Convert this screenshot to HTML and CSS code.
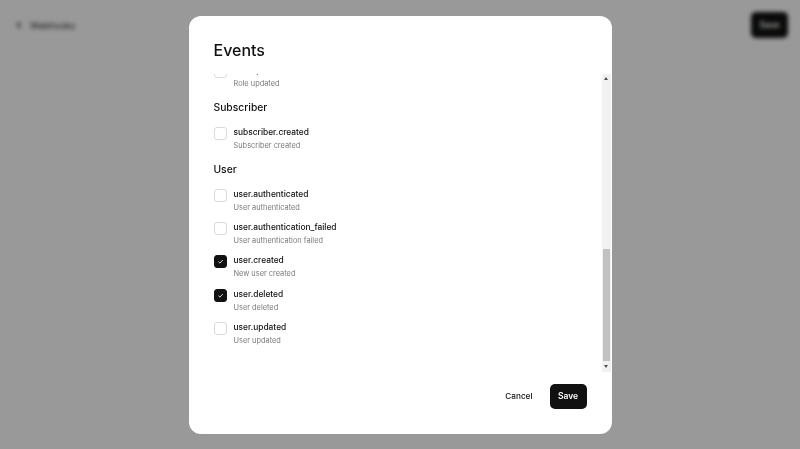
FILE: index.html
```html
<!DOCTYPE html>
<html lang="en">
<head>
  <meta charset="UTF-8">
  <title>Webhooks</title>
  <meta name="viewport" content="width=device-width, initial-scale=1">
  <link rel="stylesheet" href="styles.css">
</head>
<body>
  <header class="topbar">
    <a class="back-link" href="#">
      <svg width="8" height="8" viewBox="0 0 8 8"><polyline points="5.5,1 2.5,4 5.5,7" fill="none" stroke="currentColor" stroke-width="1.4"/></svg>
      Webhooks
    </a>
    <button class="btn btn-dark">Save</button>
  </header>

  <div class="overlay">
    <div class="dialog">
      <h2 class="dialog-title">Events</h2>

      <div class="event-pane">
        <div class="event-scroll">
          <div class="event-list">
            <section class="event-group">
              <h3>Invite</h3>
              <label class="event"><span class="check"></span><span class="event-text"><span class="event-name">invite.accepted</span><span class="event-desc">Invite accepted</span></span></label>
              <label class="event"><span class="check"></span><span class="event-text"><span class="event-name">invite.created</span><span class="event-desc">Invite created</span></span></label>
              <label class="event"><span class="check"></span><span class="event-text"><span class="event-name">invite.revoked</span><span class="event-desc">Invite revoked</span></span></label>
            </section>

            <section class="event-group">
              <h3>Organization</h3>
              <label class="event"><span class="check"></span><span class="event-text"><span class="event-name">organization.created</span><span class="event-desc">Organization created</span></span></label>
              <label class="event"><span class="check"></span><span class="event-text"><span class="event-name">organization.deleted</span><span class="event-desc">Organization deleted</span></span></label>
              <label class="event"><span class="check"></span><span class="event-text"><span class="event-name">organization.member_added</span><span class="event-desc">Member added to organization</span></span></label>
              <label class="event"><span class="check"></span><span class="event-text"><span class="event-name">organization.updated</span><span class="event-desc">Organization updated</span></span></label>
            </section>

            <section class="event-group">
              <h3>Role</h3>
              <label class="event"><span class="check"></span><span class="event-text"><span class="event-name">role.created</span><span class="event-desc">Role created</span></span></label>
              <label class="event"><span class="check"></span><span class="event-text"><span class="event-name">role.deleted</span><span class="event-desc">Role deleted</span></span></label>
              <label class="event"><span class="check"></span><span class="event-text"><span class="event-name">role.permissions_updated</span><span class="event-desc">Role permissions updated</span></span></label>
              <label class="event"><span class="check"></span><span class="event-text"><span class="event-name">role.updated</span><span class="event-desc">Role updated</span></span></label>
            </section>

            <section class="event-group">
              <h3>Subscriber</h3>
              <label class="event"><span class="check"></span><span class="event-text"><span class="event-name">subscriber.created</span><span class="event-desc">Subscriber created</span></span></label>
            </section>

            <section class="event-group">
              <h3>User</h3>
              <label class="event"><span class="check"></span><span class="event-text"><span class="event-name">user.authenticated</span><span class="event-desc">User authenticated</span></span></label>
              <label class="event"><span class="check"></span><span class="event-text"><span class="event-name">user.authentication_failed</span><span class="event-desc">User authentication failed</span></span></label>
              <label class="event"><span class="check is-checked"><svg viewBox="0 0 13 13"><polyline points="4,6.7 5.8,8.4 9.2,4.8"/></svg></span><span class="event-text"><span class="event-name">user.created</span><span class="event-desc">New user created</span></span></label>
              <label class="event"><span class="check is-checked"><svg viewBox="0 0 13 13"><polyline points="4,6.7 5.8,8.4 9.2,4.8"/></svg></span><span class="event-text"><span class="event-name">user.deleted</span><span class="event-desc">User deleted</span></span></label>
              <label class="event"><span class="check"></span><span class="event-text"><span class="event-name">user.updated</span><span class="event-desc">User updated</span></span></label>
            </section>
          </div>
        </div>

        <div class="scrollbar">
          <span class="scrollbar-btn up"></span>
          <div class="scrollbar-track"><span class="scrollbar-thumb"></span></div>
          <span class="scrollbar-btn down"></span>
        </div>
      </div>

      <div class="dialog-footer">
        <button class="btn btn-ghost">Cancel</button>
        <button class="btn btn-dark">Save</button>
      </div>
    </div>
  </div>
</body>
</html>
```

FILE: styles.css
```css
* {
  box-sizing: border-box;
}

body {
  margin: 0;
  font-family: 'Inter', sans-serif;
  color: #111;
  background: #fff;
  height: 100vh;
  overflow: hidden;
}

.topbar {
  display: flex;
  justify-content: space-between;
  align-items: center;
  padding: 12px 12px 0 15px;
}

.back-link {
  display: flex;
  align-items: center;
  gap: 7px;
  font-size: 9px;
  color: #333;
  text-decoration: none;
}

.btn {
  font-family: inherit;
  font-size: 8.5px;
  font-weight: 600;
  border: none;
  border-radius: 5px;
  cursor: pointer;
}

.btn-dark {
  background: #111;
  color: #fff;
  width: 37px;
  height: 25px;
}

.topbar .btn-dark {
  height: 26px;
}

.btn-ghost {
  background: transparent;
  color: #111;
  font-size: 8.2px;
  font-weight: 500;
  height: 25px;
  padding: 0 12px;
}

.overlay {
  position: fixed;
  inset: 0;
  background: rgba(0, 0, 0, 0.4);
  backdrop-filter: blur(2px);
  display: flex;
  align-items: center;
  justify-content: center;
}

.dialog {
  width: 423px;
  height: 418px;
  background: #fff;
  border-radius: 12px;
  display: flex;
  flex-direction: column;
  overflow: hidden;
}

.dialog-title {
  margin: 0;
  padding: 23px 25px 0;
  height: 58px;
  font-size: 16px;
  font-weight: 500;
  line-height: 22px;
}

.event-pane {
  flex: 1;
  min-height: 0;
  display: flex;
  margin-right: 1px;
}

.event-scroll {
  flex: 1;
  overflow-y: auto;
  display: flex;
  flex-direction: column-reverse;
  scrollbar-width: none;
}

/* drawn scrollbar, the real one is hidden in the shot */
.scrollbar {
  flex: none;
  width: 9px;
  display: flex;
  flex-direction: column;
  background: #f1f1f1;
}

.scrollbar-btn {
  height: 10px;
  display: flex;
  align-items: center;
  justify-content: center;
}

.scrollbar-btn::before {
  content: "";
  border-left: 2.5px solid transparent;
  border-right: 2.5px solid transparent;
}

.scrollbar-btn.up::before {
  border-bottom: 3px solid #505050;
}

.scrollbar-btn.down::before {
  border-top: 3px solid #505050;
}

.scrollbar-track {
  flex: 1;
  display: flex;
  flex-direction: column;
  justify-content: flex-end;
  padding: 0 1px 1px;
}

.scrollbar-thumb {
  height: 112px;
  background: #c1c1c1;
}

.event-list {
  padding: 8px 25px 25.5px;
}

.event-group {
  display: flex;
  flex-direction: column;
  gap: 8px;
}

.event-group + .event-group {
  margin-top: 11px;
}

.event-group h3 {
  margin: 0 0 4px;
  font-size: 10.3px;
  font-weight: 500;
  line-height: 14px;
}

.event {
  display: flex;
  align-items: flex-start;
  gap: 7px;
}

.check {
  flex: none;
  width: 13px;
  height: 13px;
  margin-top: 1px;
  border: 1px solid #dadada;
  border-radius: 3px;
  background: #fff;
  display: flex;
}

.check.is-checked {
  background: #111;
  border-color: #111;
}

.check svg {
  width: 100%;
  height: 100%;
  fill: none;
  stroke: #fff;
  stroke-width: 1;
}

.event-text {
  display: flex;
  flex-direction: column;
  gap: 1px;
}

.event-name {
  font-size: 8.4px;
  font-weight: 500;
  line-height: 13px;
}

.event-desc {
  font-size: 7.4px;
  color: #7a7a7a;
  line-height: 11.2px;
}

.dialog-footer {
  display: flex;
  justify-content: flex-end;
  align-items: center;
  gap: 5px;
  padding: 12px 25px 25px;
}
```
